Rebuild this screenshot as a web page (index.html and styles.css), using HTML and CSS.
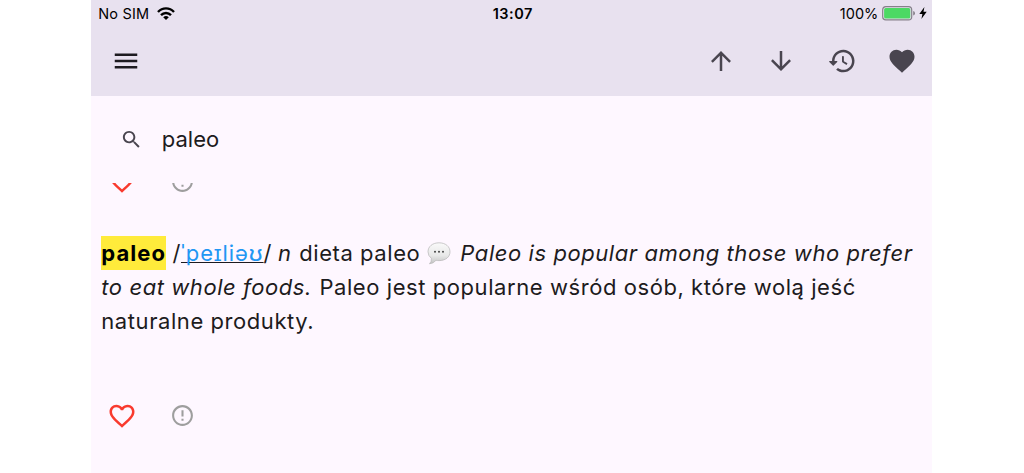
FILE: index.html
```html
<!DOCTYPE html>
<html lang="pl">
<head>
    <meta charset="UTF-8">
    <meta name="viewport" content="width=device-width, initial-scale=1.0">
    <title>paleo</title>
    <link rel="stylesheet" href="styles.css">
</head>
<body>
    <div class="app">
        <header class="header">
            <div class="status">
                <div class="status-left">
                    <span class="carrier">No SIM</span>
                    <svg class="wifi" viewBox="0 0 18 13" fill="none" stroke="#000" stroke-width="2.4">
                        <path d="M1 5 C5.5 .2 12.5 .2 17 5"/>
                        <path d="M4 8.2 C6.8 5.3 11.2 5.3 14 8.2"/>
                        <path d="M6.2 10.2 Q9 8 11.8 10.2 L9 12.9 Z" fill="#000" stroke="none"/>
                    </svg>
                </div>
                <span class="time">13:07</span>
                <div class="status-right">
                    <span class="percent">100%</span>
                    <svg class="battery" viewBox="0 0 34 15">
                        <rect x=".7" y=".7" width="29" height="13.2" rx="3.2" fill="none" stroke="#858089" stroke-width="1.2"/>
                        <rect x="2.1" y="2.1" width="26.2" height="10.4" rx="1.6" fill="#4cd964"/>
                        <path d="M31.2 5 Q33 5.6 33 7.3 T31.2 9.6 Z" fill="#858089"/>
                    </svg>
                    <svg class="bolt" viewBox="0 0 8 12"><path d="M5.4 0 L.3 6.9 H3.4 L2.4 12 L7.7 4.8 H4.5 Z"/></svg>
                </div>
            </div>
            <nav class="toolbar">
                <svg class="icon menu" viewBox="0 0 24 24"><path d="M3 18h18v-2H3v2zm0-5h18v-2H3v2zm0-7v2h18V6H3z"/></svg>
                <div class="actions">
                    <svg class="icon" viewBox="0 0 24 24"><path d="M4 12l1.41 1.41L11 7.83V20h2V7.83l5.58 5.59L20 12l-8-8-8 8z"/></svg>
                    <svg class="icon" viewBox="0 0 24 24"><path d="M20 12l-1.41-1.41L13 16.17V4h-2v12.17l-5.58-5.59L4 12l8 8 8-8z"/></svg>
                    <svg class="icon" viewBox="0 0 24 24"><path d="M13.26 3C8.17 2.86 4 6.95 4 12H2.21c-.45 0-.67.54-.35.85l2.79 2.8c.2.2.51.2.71 0l2.79-2.8c.31-.31.09-.85-.36-.85H6c0-3.9 3.18-7.05 7.1-7 3.72.05 6.85 3.18 6.9 6.9.05 3.91-3.1 7.1-7 7.1-1.61 0-3.1-.55-4.28-1.48l-1.42 1.42C8.86 20.3 10.84 21 13 21c5.05 0 9.14-4.17 9-9.26-.13-4.69-4.05-8.61-8.74-8.74zM12.75 8c-.41 0-.75.34-.75.75v3.68c0 .35.19.68.49.86l3.12 1.85.77-1.28-2.88-1.71v-3.4c0-.41-.34-.75-.75-.75z"/></svg>
                    <svg class="icon" viewBox="0 0 24 24"><path d="M12 21.35l-1.45-1.32C5.4 15.36 2 12.28 2 8.5 2 5.42 4.42 3 7.5 3c1.74 0 3.41.81 4.5 2.09C13.09 3.81 14.76 3 16.5 3 19.58 3 22 5.42 22 8.5c0 3.78-3.4 6.86-8.55 11.54L12 21.35z"/></svg>
                </div>
            </nav>
        </header>
        <div class="search">
            <svg class="search-icon" viewBox="0 0 24 24"><path d="M15.5 14h-.79l-.28-.27C15.41 12.59 16 11.11 16 9.5 16 5.91 13.09 3 9.5 3S3 5.91 3 9.5 5.91 16 9.5 16c1.61 0 3.09-.59 4.23-1.57l.27.28v.79l5 4.99L20.49 19l-4.99-5zm-6 0C7.01 14 5 11.99 5 9.5S7.01 5 9.5 5 14 7.01 14 9.5 11.99 14 9.5 14z"/></svg>
            <span class="query">paleo</span>
        </div>
        <main class="results">
            <div class="entry-actions previous">
                <svg class="heart" viewBox="0 0 24 24"><path d="M16.5 3c-1.74 0-3.41.81-4.5 2.09C10.91 3.81 9.24 3 7.5 3 4.42 3 2 5.42 2 8.5c0 3.78 3.4 6.86 8.55 11.54L12 21.35l1.45-1.32C18.6 15.36 22 12.28 22 8.5 22 5.42 19.58 3 16.5 3zm-4.4 15.55l-.1.1-.1-.1C7.14 14.24 4 11.39 4 8.5 4 6.5 5.5 5 7.5 5c1.54 0 3.04.99 3.57 2.36h1.87C13.46 5.99 14.96 5 16.5 5c2 0 3.5 1.5 3.5 3.5 0 2.89-3.14 5.74-7.9 10.05z"/></svg>
                <svg class="report" viewBox="0 0 24 24"><path d="M11 15h2v2h-2zm0-8h2v6h-2zm.99-5C6.47 2 2 6.48 2 12s4.47 10 9.99 10C17.52 22 22 17.52 22 12S17.52 2 11.99 2zM12 20c-4.42 0-8-3.58-8-8s3.58-8 8-8 8 3.58 8 8-3.58 8-8 8z"/></svg>
            </div>
            <div class="entry">
                <div class="line"><b class="match">paleo</b><span class="slash">/</span><span class="ipa">ˈpeɪliəʊ</span><span>/</span><i class="pos">n</i><span class="meaning">dieta paleo</span><svg class="bubble" viewBox="0 0 24 23">
                        <defs>
                            <linearGradient id="shade" x1="0" y1="0" x2="0" y2="1">
                                <stop offset="0" stop-color="#fafafa"/>
                                <stop offset=".6" stop-color="#e8e8e8"/>
                                <stop offset="1" stop-color="#c4c4c4"/>
                            </linearGradient>
                        </defs>
                        <path d="M12 .8 C18.5 .8 23 4.5 23 9.8 S18.5 18.6 12 18.6 Q10.5 18.6 9 18.3 Q6.5 21.5 2.5 21.8 Q4.8 19.5 4.4 16.4 Q1 13.8 1 9.8 C1 4.5 5.5 .8 12 .8Z" fill="url(#shade)" stroke="#b5b5b5" stroke-width=".7"/>
                        <circle cx="8" cy="9.7" r="1" fill="#444"/>
                        <circle cx="12" cy="9.7" r="1" fill="#444"/>
                        <circle cx="16" cy="9.7" r="1" fill="#444"/>
                    </svg><i class="example">Paleo is popular among those who prefer</i></div>
                <div class="line"><i class="example-end">to eat whole foods.</i><span class="translation">Paleo jest popularne wśród osób, które wolą jeść</span></div>
                <div class="line"><span class="translation-end">naturalne produkty.</span></div>
            </div>
            <div class="entry-actions">
                <svg class="heart" viewBox="0 0 24 24"><path d="M16.5 3c-1.74 0-3.41.81-4.5 2.09C10.91 3.81 9.24 3 7.5 3 4.42 3 2 5.42 2 8.5c0 3.78 3.4 6.86 8.55 11.54L12 21.35l1.45-1.32C18.6 15.36 22 12.28 22 8.5 22 5.42 19.58 3 16.5 3zm-4.4 15.55l-.1.1-.1-.1C7.14 14.24 4 11.39 4 8.5 4 6.5 5.5 5 7.5 5c1.54 0 3.04.99 3.57 2.36h1.87C13.46 5.99 14.96 5 16.5 5c2 0 3.5 1.5 3.5 3.5 0 2.89-3.14 5.74-7.9 10.05z"/></svg>
                <svg class="report" viewBox="0 0 24 24"><path d="M11 15h2v2h-2zm0-8h2v6h-2zm.99-5C6.47 2 2 6.48 2 12s4.47 10 9.99 10C17.52 22 22 17.52 22 12S17.52 2 11.99 2zM12 20c-4.42 0-8-3.58-8-8s3.58-8 8-8 8 3.58 8 8-3.58 8-8 8z"/></svg>
            </div>
        </main>
    </div>
</body>
</html>
```
FILE: styles.css
```css
* {
    box-sizing: border-box;
}
body {
    margin: 0;
    background: #fff;
    font-family: Inter, "Liberation Sans", sans-serif;
    color: #1d1b20;
}
svg {
    display: block;
    flex: none;
}
.app {
    width: 841px;
    height: 473px;
    margin-left: 91.3px;
    background: #fef7ff;
    overflow: hidden;
}
.header {
    height: 96px;
    background: #e8e1ef;
}
.status {
    display: grid;
    grid-template-columns: 1fr auto 1fr;
    align-items: center;
    height: 26px;
    padding: 0 5px 0 7px;
    font-size: 14.5px;
    color: #000;
}
.status-left, .status-right {
    display: flex;
    align-items: center;
}
.status-right {
    justify-content: flex-end;
}
.carrier {
    letter-spacing: 0.15px;
}
.wifi {
    width: 18px;
    height: 13px;
    margin-left: 8px;
}
.time {
    font-weight: 600;
    letter-spacing: 0.5px;
}
.battery {
    width: 34px;
    height: 15px;
    margin-left: 4px;
}
.bolt {
    width: 8px;
    height: 12px;
    margin-left: 3px;
}
.toolbar {
    display: flex;
    align-items: center;
    justify-content: space-between;
    height: 69px;
    padding: 0 15px 0 20px;
}
.actions {
    display: flex;
    gap: 30.5px;
}
.icon {
    width: 30px;
    height: 30px;
    fill: #49454f;
}
.menu {
    fill: #1d1b20;
}
.search {
    display: flex;
    align-items: center;
    height: 87px;
    padding-left: 28.5px;
}
.search-icon {
    width: 23px;
    height: 23px;
    fill: #49454f;
}
.query {
    margin: 0 0 1px 19px;
    font-size: 22px;
}
.results {
    height: 290px;
    overflow: hidden;
}
.entry-actions {
    display: flex;
    align-items: center;
    gap: 33px;
    height: 30px;
    padding-left: 15.3px;
}
.previous {
    margin-top: -17px;
}
.heart {
    width: 30px;
    height: 30px;
    fill: #f93a2e;
}
.report {
    width: 25px;
    height: 25px;
    fill: #9e9e9e;
}
.entry {
    margin: 40px 0 62.5px 10px;
    font-size: 22px;
    line-height: 34px;
    letter-spacing: 0.57px;
}
.line {
    display: flex;
    height: 34px;
    white-space: nowrap;
}
.match {
    background: #ffeb3b;
    color: #000;
    letter-spacing: 1.05px;
}
.slash {
    margin-left: 6.5px;
}
.ipa {
    color: #2196f3;
    letter-spacing: 0.9px;
    text-decoration: underline;
    text-decoration-color: #1d1b20;
    text-decoration-thickness: 1.3px;
    text-decoration-skip-ink: none;
}
.pos {
    margin-left: 6px;
}
.meaning {
    margin-left: 7.5px;
}
.bubble {
    width: 24px;
    height: 23px;
    margin: 5.5px 0 0 7px;
}
.example {
    margin-left: 9px;
}
.translation {
    margin-left: 7.5px;
}
```
